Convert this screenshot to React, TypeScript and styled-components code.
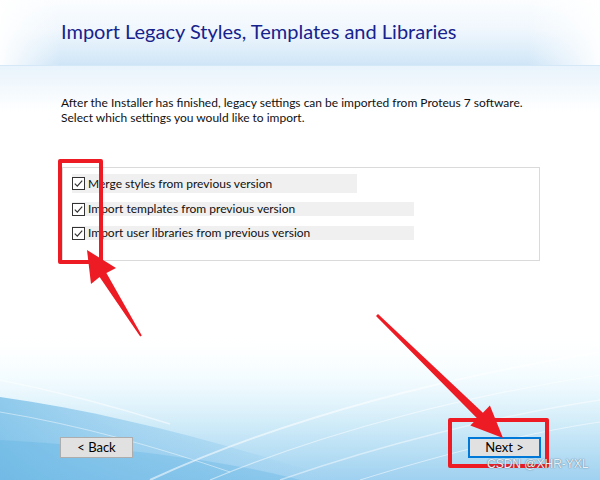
import React from "react";
import styled, { createGlobalStyle } from "styled-components";

const GlobalStyle = createGlobalStyle`
  html, body {
    margin: 0;
    padding: 0;
    background: #ffffff;
  }
  body {
    font-family: Lato, "Liberation Sans", sans-serif;
    font-size: 12px;
    color: #111111;
  }
`;

const RED = "#ed1c24";

//
// window frame
/////////////////////////////////////////////////////////////////////////////////
const WizardView = styled.div`
  position: relative;
  width: 600px;
  height: 480px;
  overflow: hidden;
  background: #ffffff;
  display: flex;
  flex-direction: column;
`;

const WavesLayer = styled.svg`
  position: absolute;
  left: 0;
  top: 0;
  width: 600px;
  height: 480px;
  z-index: 0;
  pointer-events: none;
`;

// header band
const Header = styled.header`
  position: relative;
  z-index: 1;
  box-sizing: border-box;
  height: 66px;
  padding: 19px 0 0 61px;
  border-bottom: 1px solid #d4e8f8;
  background:
    linear-gradient(
      to right,
      rgba(255, 255, 255, 0.95) 0%,
      rgba(255, 255, 255, 0) 10%,
      rgba(255, 255, 255, 0) 88%,
      rgba(255, 255, 255, 0.95) 100%
    ),
    linear-gradient(to bottom, #fbfdff 0%, #f0f7fd 45%, #d9ebf9 85%, #cfe5f7 100%);
`;

const Title = styled.h1`
  margin: 0;
  font-family: Lato, "Liberation Sans", sans-serif;
  font-size: 20px;
  line-height: 24px;
  font-weight: 400;
  color: #17228c;
`;

//
// main content
/////////////////////////////////////////////////////////////////////////////////
const Body = styled.main`
  position: relative;
  z-index: 1;
  flex: 1;
  display: flex;
  flex-direction: column;
  padding: 29px 60px 0 61px;
  background: linear-gradient(to bottom, rgba(230, 242, 251, 0.9) 0px, rgba(255, 255, 255, 0) 45px);
`;

const Intro = styled.p`
  margin: 0;
  font-size: 12px;
  line-height: 15px;
  color: #111111;
`;

const OptionsGroup = styled.section`
  box-sizing: border-box;
  width: 478px;
  margin: 42px 0 0 1px;
  padding: 6px 9px 20px;
  border: 1px solid #dadada;
  display: flex;
  flex-direction: column;
`;

const OptionRow = styled.label<{ $width: number; $height: number; $gap: number }>`
  display: flex;
  align-items: center;
  gap: 3px;
  width: ${(p) => p.$width}px;
  height: ${(p) => p.$height}px;
  margin-top: ${(p) => p.$gap}px;
  background: #f0f0f0;
  font-size: 12px;
  line-height: ${(p) => p.$height}px;
  color: #111111;
  white-space: nowrap;
`;

const CheckBox = styled.span`
  box-sizing: border-box;
  flex: none;
  width: 13px;
  height: 13px;
  border: 1px solid #333333;
  background: #ffffff;
  display: flex;
  align-items: center;
  justify-content: center;
`;

const Spacer = styled.div`
  flex: 1;
`;

// footer buttons
const Footer = styled.footer`
  display: flex;
  justify-content: space-between;
  margin: 0 -1px 22px -1px;
`;

const WizardButton = styled.button<{ $focused?: boolean }>`
  box-sizing: border-box;
  width: 73px;
  height: 21px;
  padding: 0;
  font-family: Lato, "Liberation Sans", sans-serif;
  font-size: 13px;
  line-height: 17px;
  color: #000000;
  background: #e1e1e1;
  border: ${(p) => (p.$focused ? "2px solid #0078d7" : "1px solid #adadad")};
`;

//
// annotations drawn over the screenshot
/////////////////////////////////////////////////////////////////////////////////
const Highlight = styled.div<{ $x: number; $y: number; $w: number; $h: number }>`
  position: absolute;
  z-index: 3;
  box-sizing: border-box;
  left: ${(p) => p.$x}px;
  top: ${(p) => p.$y}px;
  width: ${(p) => p.$w}px;
  height: ${(p) => p.$h}px;
  border: 4px solid ${RED};
  border-radius: 2px;
`;

const ArrowLayer = styled.svg`
  position: absolute;
  left: 0;
  top: 0;
  width: 600px;
  height: 480px;
  z-index: 3;
  pointer-events: none;
`;

const Watermark = styled.span`
  position: absolute;
  z-index: 4;
  left: 487px;
  top: 457px;
  font-family: "Liberation Sans", Arial, sans-serif;
  font-size: 12px;
  line-height: 14px;
  color: rgba(244, 248, 252, 0.95);
  text-shadow: 0 0 1px rgba(80, 100, 120, 0.85), 0 0 2px rgba(80, 100, 120, 0.4);
`;

const CheckMark = () => (
  <svg width="11" height="11" viewBox="0 0 11 11">
    <path d="M1.8 5.6 L4.3 8.1 L9.2 2.6" fill="none" stroke="#333333" strokeWidth="1.2" />
  </svg>
);

const Waves = () => (
  <WavesLayer viewBox="0 0 600 480">
    <defs>
      <linearGradient id="sky" x1="0" y1="0" x2="0" y2="1">
        <stop offset="0" stopColor="#ffffff" stopOpacity="0" />
        <stop offset="0.3" stopColor="#f0fbff" stopOpacity="0.7" />
        <stop offset="0.65" stopColor="#cdeaf8" />
        <stop offset="1" stopColor="#9fd1f0" />
      </linearGradient>
      <linearGradient id="swoosh" x1="0" y1="0" x2="1" y2="0">
        <stop offset="0" stopColor="#72bbe6" stopOpacity="0.75" />
        <stop offset="0.6" stopColor="#8ac6ec" stopOpacity="0.4" />
        <stop offset="1" stopColor="#a6d5f2" stopOpacity="0.1" />
      </linearGradient>
    </defs>
    <rect x="0" y="330" width="600" height="150" fill="url(#sky)" />
    <path d="M0 397 C110 412 230 445 340 480 L0 480 Z" fill="url(#swoosh)" />
    <path d="M0 440 C140 448 250 466 300 480 L0 480 Z" fill="#5aaee2" opacity="0.3" />
    <path d="M150 480 C280 420 430 380 600 352" fill="none" stroke="#ffffff" strokeWidth="2" opacity="0.55" />
    <path d="M210 480 C330 430 470 395 600 375" fill="none" stroke="#ffffff" strokeWidth="1.2" opacity="0.5" />
    <path d="M280 480 C380 445 500 415 600 400" fill="none" stroke="#ffffff" strokeWidth="1.5" opacity="0.45" />
    <path d="M360 480 C440 455 530 432 600 422" fill="none" stroke="#ffffff" strokeWidth="1" opacity="0.5" />
    <path d="M0 380 C60 392 110 405 170 424" fill="none" stroke="#ffffff" strokeWidth="1.5" opacity="0.5" />
    <path d="M0 412 C80 425 160 448 230 472" fill="none" stroke="#ffffff" strokeWidth="1" opacity="0.45" />
  </WavesLayer>
);

const Arrows = () => (
  <ArrowLayer viewBox="0 0 600 480">
    <polygon
      points="87,250 116,268 106.4,272.9 141.8,335.5 140.2,336.5 99.6,277.1 91,284"
      fill={RED}
    />
    <polygon
      points="503,438 470.3,425.6 477.3,418.5 376,316 378,313.9 482.9,412.7 489.9,405.6"
      fill={RED}
    />
  </ArrowLayer>
);

const options = [
  { label: "Merge styles from previous version", width: 285, height: 19, gap: 0 },
  { label: "Import templates from previous version", width: 342, height: 14, gap: 9 },
  { label: "Import user libraries from previous version", width: 342, height: 14, gap: 10 },
];

const App = () => {
  return (
    <>
      <GlobalStyle />
      <WizardView>
        <Waves />
        <Header>
          <Title>Import Legacy Styles, Templates and Libraries</Title>
        </Header>
        <Body>
          <Intro>
            After the Installer has finished, legacy settings can be imported from Proteus 7 software.
            <br />
            Select which settings you would like to import.
          </Intro>
          <OptionsGroup>
            {options.map((o) => (
              <OptionRow key={o.label} $width={o.width} $height={o.height} $gap={o.gap}>
                <CheckBox>
                  <CheckMark />
                </CheckBox>
                {o.label}
              </OptionRow>
            ))}
          </OptionsGroup>
          <Spacer />
          <Footer>
            <WizardButton>&lt; Back</WizardButton>
            <WizardButton $focused>Next &gt;</WizardButton>
          </Footer>
        </Body>
        <Highlight $x={58} $y={159} $w={45} $h={105} />
        <Highlight $x={448} $y={418} $w={101} $h={50} />
        <Arrows />
        <Watermark>CSDN @XHR-YXL</Watermark>
      </WizardView>
    </>
  );
};

export default App;
